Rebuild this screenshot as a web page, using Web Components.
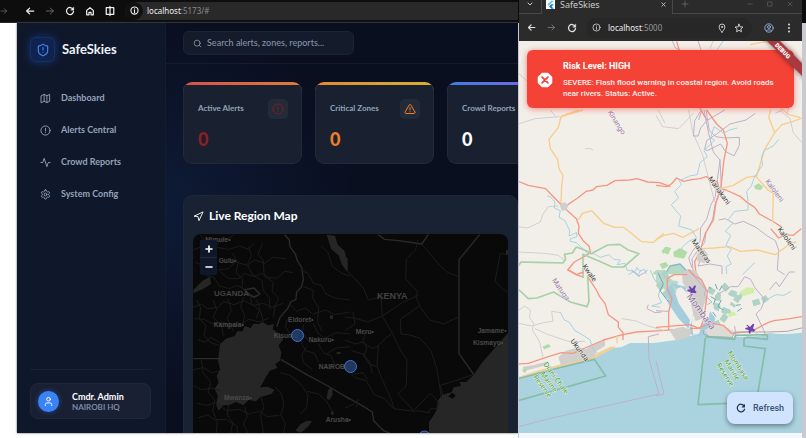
<!DOCTYPE html>
<html lang="en">
<head>
<meta charset="utf-8">
<title>SafeSkies</title>
<style>
html,body{margin:0;height:100%;background:#fff;overflow:hidden}
body{font-family:Lato,"Open Sans",sans-serif}
</style>
</head>
<body>
<desk-top>
  <dashboard-window slot="left"></dashboard-window>
  <phone-window slot="right"></phone-window>
</desk-top>
<script>
const define = (name, html) => {
  const t = document.createElement('template');
  t.innerHTML = html;
  customElements.define(name, class extends HTMLElement {
    constructor(){ super(); this.attachShadow({mode:'open'}).append(t.content.cloneNode(true)); }
  });
};

const icons = {
  shield:'<path d="M20 13c0 5-3.500 7.500-7.660 8.950a1 1 0 0 1-.67-.01C7.500 20.500 4 18 4 13V6a1 1 0 0 1 1-1c2 0 4.500-1.200 6.240-2.720a1.170 1.170 0 0 1 1.520 0C14.510 3.810 17 5 19 5a1 1 0 0 1 1 1z"/><path d="M12 8v4M12 16h.01"/>',
  map:'<path d="M3 6l6-3 6 3 6-3v15l-6 3-6-3-6 3zM9 3v15M15 6v15"/>',
  alert:'<circle cx="12" cy="12" r="10"/><path d="M12 7v6M12 16.500h.01"/>',
  activity:'<path d="M22 12h-4l-3 9L9 3l-3 9H2"/>',
  settings:'<path d="M12.220 2h-.44a2 2 0 0 0-2 2v.18a2 2 0 0 1-1 1.730l-.43.25a2 2 0 0 1-2 0l-.15-.08a2 2 0 0 0-2.730.73l-.22.38a2 2 0 0 0 .73 2.730l.15.1a2 2 0 0 1 1 1.720v.51a2 2 0 0 1-1 1.740l-.15.09a2 2 0 0 0-.73 2.730l.22.38a2 2 0 0 0 2.730.73l.15-.08a2 2 0 0 1 2 0l.43.25a2 2 0 0 1 1 1.730V20a2 2 0 0 0 2 2h.44a2 2 0 0 0 2-2v-.18a2 2 0 0 1 1-1.730l.43-.25a2 2 0 0 1 2 0l.15.08a2 2 0 0 0 2.730-.73l.22-.39a2 2 0 0 0-.73-2.730l-.15-.08a2 2 0 0 1-1-1.740v-.5a2 2 0 0 1 1-1.740l.15-.09a2 2 0 0 0 .73-2.730l-.22-.38a2 2 0 0 0-2.730-.73l-.15.08a2 2 0 0 1-2 0l-.43-.25a2 2 0 0 1-1-1.730V4a2 2 0 0 0-2-2z"/><circle cx="12" cy="12" r="3"/>',
  search:'<circle cx="11" cy="11" r="8"/><path d="M21 21l-4.300-4.300"/>',
  user:'<path d="M19 21v-2a4 4 0 0 0-4-4H9a4 4 0 0 0-4 4v2"/><circle cx="12" cy="7" r="4"/>',
  nav:'<path d="M3 11l19-9-9 19-2-8z"/>',
  triangle:'<path d="M21.730 18l-8-14a2 2 0 0 0-3.480 0l-8 14A2 2 0 0 0 4 21h16a2 2 0 0 0 1.730-3zM12 9v5M12 17.500h.01"/>',
  people:'<circle cx="9" cy="7" r="4"/><path d="M2 21v-2a4 4 0 0 1 4-4h6a4 4 0 0 1 4 4v2"/>',
  back:'<path d="M21 12H4M11 5l-7 7 7 7"/>',
  forward:'<path d="M3 12h17M13 5l7 7-7 7"/>',
  reload:'<path d="M19.500 8A8.500 8.500 0 1 0 20.500 13"/><path d="M21 3v7h-7z" fill="currentColor" stroke-width="1"/>',
  home:'<path d="M4 10.500L12 4l8 6.500V21h-5.500v-6h-5v6H4z"/>',
  split:'<path d="M10 4H3v16h7M14 4h7v16h-7M12 1v22"/>',
  info:'<circle cx="12" cy="12" r="9.500"/><path d="M12 11v6M12 7.500h.01"/>',
  pin:'<path d="M12 22s7-7 7-12.500a7 7 0 0 0-14 0C5 15 12 22 12 22z"/><circle cx="12" cy="9.500" r="1.500"/>',
  star:'<path d="M12 3l2.700 6.200 6.800.6-5.100 4.500 1.500 6.700-5.900-3.500L6.100 21l1.500-6.700-5.100-4.500 6.800-.6z"/>',
  account:'<circle cx="12" cy="12" r="10"/><circle cx="12" cy="9.500" r="3.500"/><path d="M5.500 19c3-4 10-4 13 0"/>',
  dots:'<g fill="currentColor" stroke="none"><circle cx="12" cy="3.500" r="2.300"/><circle cx="12" cy="12" r="2.300"/><circle cx="12" cy="20.500" r="2.300"/></g>',
  plus:'<path d="M12 3v18M3 12h18"/>', minus:'<path d="M3 12h18"/>',
  close:'<path d="M4 4l16 16M20 4L4 20"/>', down:'<path d="M4 8l8 8 8-8"/>', square:'<path d="M4 4h16v16H4z"/>',
  error:'<path d="M7.500 1h9L23 7.500v9L16.500 23h-9L1 16.500v-9z" fill="#fff" stroke="#fff"/><path d="M7 7l10 10M17 7L7 17" stroke="#f44336"/>',
  refresh:'<path d="M19.500 7A9 9 0 1 0 20.500 15"/><path d="M21.500 2v8.500H13z" fill="currentColor" stroke="none"/>',
  flutter:'<path d="M0 0h24v24H0z" fill="#fff" stroke="none"/><path d="M14 2h7L7 15l-3-3z" fill="#54c5f8" stroke="none"/><path d="M14 11h7l-6 6 6 6h-7l-6-6z" fill="#1679c9" stroke="none"/>'
};
customElements.define('ui-icon', class extends HTMLElement {
  connectedCallback(){
    if (this.shadowRoot) return;
    this.attachShadow({mode:'open'}).innerHTML = `<style>:host{display:inline-flex;flex:none;width:var(--size,12px);height:var(--size,12px)}svg{width:100%;height:100%;overflow:visible}</style>
    <svg viewBox="0 0 24 24" fill="none" stroke="currentColor" stroke-width="${this.getAttribute('weight')||2}" stroke-linecap="round" stroke-linejoin="round" aria-hidden="true">${icons[this.getAttribute('name')]}</svg>`;
  }
});

define('desk-top', `<style>
:host{display:grid;grid-template-columns:minmax(0,1fr) 288px;height:100vh;overflow:hidden}
::slotted(*){min-width:0;min-height:0}
</style><slot name="left"></slot><slot name="right"></slot>`);

define('dashboard-window', `<style>
:host{display:flex;flex-direction:column;background:#fff;overflow:hidden}
.page{flex:1;min-height:0;display:flex;margin:0 0 5px 17px;background:#0b1021;box-shadow:0 0 2px #555;overflow:hidden}
main{flex:1;min-width:0;display:flex;flex-direction:column;background:radial-gradient(circle at 0 45%,#0e1a36,#0a0f20 45%)}
header{padding:8px 17px;border-bottom:1px solid #151b2b}
.body{flex:1;min-height:0;display:flex;flex-direction:column;gap:31px;padding:18px 0 0 17px}
.cards{display:grid;grid-template-columns:repeat(3,119px);gap:13px}
</style>
<browser-bar></browser-bar>
<div class="page"><side-bar></side-bar><main>
<header><search-box></search-box></header>
<div class="body"><div class="cards">
<stat-card style="--from:#d9504f;--to:#e07b39;--tone:#8b2024;--icon:#7a1f24"><ui-icon slot="icon" name="alert"></ui-icon>Active Alerts<span slot="value">0</span></stat-card>
<stat-card style="--from:#e08a35;--to:#d6b12f;--tone:#ee7d24;--icon:#ee7d24"><ui-icon slot="icon" name="triangle"></ui-icon>Critical Zones<span slot="value">0</span></stat-card>
<stat-card style="--from:#3f7fe0;--to:#8a5ce0;--tone:#fff;--icon:#3b82f6"><ui-icon slot="icon" name="people"></ui-icon>Crowd Reports<span slot="value">0</span></stat-card>
</div><map-panel></map-panel></div></main></div>`);

define('browser-bar', `<style>
:host{display:flex;align-items:center;height:23px;flex:none;gap:8px;background:#0d0d0d;color:#eee;border-bottom:1px solid #24262c;box-sizing:border-box;padding-bottom:1px;overflow:hidden}
button{all:unset;display:flex;align-items:center;width:12px;justify-content:center;--size:10px}
.edge{width:16px;justify-content:flex-start;color:#777}
.dim{color:#777}
.url{flex:1;display:flex;align-items:center;gap:4px;height:18px;background:#292929;border-radius:9px 0 0 9px;margin-left:1px}
.url button{width:18px;height:18px;border-radius:9px;background:#111;--size:9px}
.url a{font:8px/12px "Noto Sans",sans-serif;color:#eee;text-decoration:none}
.url span{color:#8a8a8a}
nav{display:flex;gap:8px}
</style>
<button class="edge" aria-label="Next"><ui-icon name="forward" style="--size:8px"></ui-icon></button>
<nav><button aria-label="Back"><ui-icon name="back" weight="3"></ui-icon></button>
<button class="dim" aria-label="Forward"><ui-icon name="forward"></ui-icon></button>
<button aria-label="Reload"><ui-icon name="reload" weight="3"></ui-icon></button>
<button aria-label="Home"><ui-icon name="home" weight="3"></ui-icon></button>
<button aria-label="Split view"><ui-icon name="split" weight="3"></ui-icon></button></nav>
<div class="url"><button aria-label="Site information"><ui-icon name="info" weight="3"></ui-icon></button><a href="#">localhost<span>:5173/#</span></a></div>`);

define('side-bar', `<style>
:host{display:flex;flex-direction:column;width:149px;flex:none;box-sizing:border-box;background:#0f172a;border-right:1px solid #141c30;padding:14px 14px 14px 13px}
.brand{display:flex;align-items:center;gap:7px;color:#eef2fa;font:700 13px/25px Lato,sans-serif;padding-bottom:20px}
.badge{display:grid;place-items:center;width:25px;height:25px;border-radius:6px;background:#10234f;border:1px solid #163066;box-sizing:border-box;color:#3f82f2;box-shadow:0 0 8px #16377a;--size:14px}
nav{display:flex;flex-direction:column}
nav a{display:flex;align-items:center;gap:10px;height:32px;padding-left:10px;color:#94a3b8;text-decoration:none;font:700 9px/14px Lato,sans-serif;--size:11px}
footer{margin-top:auto;border-top:1px solid #182136;padding-top:13px}
.me{display:flex;align-items:center;gap:13px;height:36px;box-sizing:border-box;padding-left:7px;border:1px solid #20283c;border-radius:8px;background:#1a2033}
.avatar{display:grid;place-items:center;width:21px;height:21px;border-radius:50%;background:#3b82f6;color:#fff;--size:11px;box-shadow:0 0 5px #204b94}
b{display:block;font:700 9px/11px Lato,sans-serif;color:#fff}
small{display:block;font:700 8px/10px Lato,sans-serif;color:#7c8aa3}
</style>
<div class="brand"><span class="badge"><ui-icon name="shield"></ui-icon></span>SafeSkies</div>
<nav><a href="#"><ui-icon name="map"></ui-icon>Dashboard</a><a href="#"><ui-icon name="alert"></ui-icon>Alerts Central</a><a href="#"><ui-icon name="activity"></ui-icon>Crowd Reports</a><a href="#"><ui-icon name="settings"></ui-icon>System Config</a></nav>
<footer><div class="me"><span class="avatar"><ui-icon name="user"></ui-icon></span><div><b>Cmdr. Admin</b><small>NAIROBI HQ</small></div></div></footer>`);

define('search-box', `<style>
:host{display:block}
label{display:flex;align-items:center;gap:5px;width:171px;height:24px;box-sizing:border-box;padding:0 9px;border:1px solid #1c2434;border-radius:6px;background:#141b2b;color:#94a3b8;--size:9px}
input{all:unset;flex:1;min-width:0;font:500 9px/14px Lato,sans-serif;color:#94a3b8}
input::placeholder{color:#8491a8;opacity:1}
</style><label><ui-icon name="search"></ui-icon><input type="text" aria-label="Search" placeholder="Search alerts, zones, reports..."></label>`);

define('stat-card', `<style>
:host{display:block;height:82px;box-sizing:border-box;border-radius:9px;background:linear-gradient(90deg,var(--from),var(--to)) 0 0/100% 12px no-repeat #192131;overflow:hidden;padding-top:3px}
.in{height:100%;box-sizing:border-box;background:#192131;border:1px solid #202a3b;border-top:0;border-radius:0 0 9px 9px;padding:14px 13px 0 14px}
.top{display:flex;justify-content:space-between;align-items:flex-start;color:#94a3b8;font:700 8px/18px Lato,sans-serif;white-space:nowrap}
.ic{display:grid;place-items:center;width:20px;height:20px;border-radius:5px;background:#232b39;color:var(--icon);--size:12px}
.v{font:900 18px/20px Lato,sans-serif;color:var(--tone);padding-top:10px}
</style><div class="in"><div class="top"><div><slot></slot></div><span class="ic"><slot name="icon"></slot></span></div><div class="v"><slot name="value"></slot></div></div>`);

define('map-panel', `<style>
:host{flex:1;min-height:0;display:flex;flex-direction:column;box-sizing:border-box;background:#192233;border:1px solid #1d2738;border-bottom:0;border-radius:9px 9px 0 0;padding:10px 9px 0 9px}
h2{display:flex;align-items:center;gap:5px;margin:0 0 8px;color:#fff;font:700 12px/20px Lato,sans-serif;--size:11px}
.map{flex:1;min-height:0;position:relative;border-radius:8px 8px 0 0;overflow:hidden;background:#090909}
.zoom{position:absolute;left:7px;top:6px;display:grid;gap:1px;background:#1e293b;border-radius:3px;overflow:hidden}
button{all:unset;display:grid;place-items:center;width:17px;height:17px;background:#0f172a;color:#fff;--size:8px}
</style><h2><ui-icon name="nav"></ui-icon>Live Region Map</h2>
<div class="map"><dark-map></dark-map><div class="zoom"><button aria-label="Zoom in"><ui-icon name="plus" weight="5"></ui-icon></button><button aria-label="Zoom out"><ui-icon name="minus" weight="5"></ui-icon></button></div></div>`);

/* Regional roads and borders are drawn on two sheets, each at three units per pixel. */
define('dark-map', `<style>:host{display:block;height:100%}svg{display:block;width:100%;height:100%}text{font-family:"Liberation Sans",sans-serif;font-weight:700;fill:#4a4a4a;font-size:20px}.c{font-size:24px;fill:#424242}.r{stroke:#1c1c1c;stroke-width:3}.b{stroke:#2b2b2b;stroke-width:4}.w{fill:#262626;stroke:none}</style>
<svg viewBox="193 234 315 199" preserveAspectRatio="xMinYMin slice" fill="none" stroke-linejoin="round">
<g transform="translate(170 190) scale(.333333)">
<path class="w" d="M470 134l25 4 8 26 20 18 8 28-3 30-12-16-10-28-22-18-8-24zM70 300l28-28 22-12 3 22-22 14-31 14z"/>
<path class="w" d="M150 462l18-16 26-8 8-14 16 0 6-16 18 6 8-12 18 0 10-6 16 10 18-4-4 16 20 14 12 16-14 18 8 22-4 24-14 10 6 12-22 8-12 18-10 20-8 12 24-2 20 10-10 12-34 10-12 12-22-4-16 16-22-10-20 10-18 0-14 16-8-20 6-24-10-22 12-18-6-20 10-20-6-26z"/>
<path class="w" d="M376 722l16-20 20-10 14 2-12 16-22 18zM474 600l12-8 2 22-10 16-8-4zM480 374l10 4-2 10-8-2zM500 486h12v6h-12zM484 662l8 6-3 8-6-4z"/>
<path class="b" d="M344 134l14 16 2 20 16 22 6 20 14 22 4 36-6 22-14 14-2 22-16 8-8 18-24 28-10 28M70 506h84M332 508l82 48 60 32 66 40"/>
<path class="r" d="M70 180l24-10 20 12 22-6 14-26 30-6 12-10M90 134l20 24 28 14 40 6 30-10 28 10 18-20M76 216l20 10 28 0 18 14 34-4 20-20 36 10 22-16 30 10 24-18 40 4M110 256l22 6 16 26 30 8 24-10 22 14 20 16M150 244l26 22 30 0 18-16 28 10 22-10 18 14 30 0 22-20 24 4M188 190l16 30-6 28 20 20-2 24 24 26 6 24 26 22 8 30M236 168l8 30-12 26 14 28 30 20 4 30 18 20 2 36M278 160l-14 32 16 20 2 40 28 26-4 26 20 20-12 30-4 30M70 352l24-10 18 14 34-4 14-18 32 10 30-12 28 14 30-6 26 12 34-12M80 330l12 24-4 32 20 20-6 30 18 20 26 10M130 330l10 28-10 24 26 28 4 26M174 326l10 34-12 24 18 40M220 322l-8 28 12 26-6 32M260 330l10 26-12 30M72 386l30 2 24 14 32-6 24 12 30-4 24-16 34 8 26-12M84 450l22 6 16-14 24 14M70 540l30-8 24 16 20-4M94 510l6 40 22 26-8 30 20 24-6 34 14 30-4 40M72 588l24 12 30-6 24 8M82 640l28 6 26-8 34 24 40-4 26 14 34-8 22 16 36-4M84 684l30-10 20 16 34-2 32 20 4 26M176 644l-4 30 16 24-6 32M224 650l8 30-12 20 14 30M270 616l12 34-10 24 8 56M314 590l20 20 8 36-10 28 14 26-6 30M330 548l30 8 32 26 22 32-4 40-20 18"/>
<path class="r" d="M390 240l24 10 16 30 24 6 14 26 26 12 46 6M400 290l30 10-2 24 18 30-4 40 14 30M360 344l20 20 26-10 22 18 40-12 24 14 48-8M352 388l-6 22 16 24 30 20 14 28 28 8 12 28M400 404l-2 26 20 24 18 2M430 400l14 30 20 14 34-16 42 4M410 470l-14 24 4 24 26 20M444 460l18 30 20 6 16 34M470 490l30-16 40-4M412 604l34 8 22 20 22 36M454 168l20 20 12 40 30 22 24 8"/>
<path stroke="#292929" stroke-width="5" d="M232 310l20 12 14-8M222 300l30-6 20 20"/>
<g stroke="none"><text x="106" y="156">Mimule•</text><text x="146" y="220">Gulu•</text><text class="c" x="132" y="319">UGANDA</text><text x="131" y="411">Kampala•</text><text x="354" y="396">Eldoret•</text><text x="311" y="444">Kisumu</text><text x="416" y="457">Nakuru•</text><text x="446" y="538">NAIROBI</text><text x="162" y="631">Mwanza•</text></g>
</g>
<g transform="translate(345 190) scale(.333333)">
<path class="w" d="M489 428l-48 56-30 34-25 36-22 22-20 0 4 12-22 4-6 14-30 10-12 18-4 28-8 14-14 20v40h237zM0 204h8v42l-8-8zM483 180h8v14h-8zM310 620l10-12 12 8-8 10z"/>
<path class="b" d="M100 134l18 14 44 4 68 10 20-28M404 134l-62 75v282l44 62M0 618l50 28 32 20 4 26 30 30 20 8"/>
<path class="r" d="M218 150l-6 30-28 26-2 60 36 40-6 12 14 34 28 38 42 12 46-22M230 162l54 64 22 20 34 14M220 350l-54 38 2 44 22 2 34 10 34 38 18 56 14 90M108 316l4 62 30 52-20 14-22 22-4 60 12 34 30 66 10 32M142 430l24 50 20 30-2 78-26 24 48 50 50-52 26 28-4 18-22 0-6 12M112 378l-44 18-40-12-28-2M112 378l60-40 48-22M0 236l30 30 26 30 14 34 40-10M384 554l-58 20-40 12 8 30M212 664l-66-8-28-30-30-12-24-42-36-10-22-32M24 366l6 36-30 20M0 450l30 12 22-6 30 20 18-8M60 430l-6 24 12 20-10 26 18 14 8 36M20 482l38 12 14 28 24 8M466 190l-16 84 24 24 14 8M466 190l20 4M4 536l26 16 24-4 14 20M214 662l40 6M0 654l26-12 14-14-6 24"/>
<g stroke="none"><text class="c" style="font-size:27px" x="96" y="326">KENYA</text><text x="32" y="432">Meru•</text><text x="398" y="430">Jamame•</text><text x="384" y="464">Kismayo•</text><text x="-58" y="697">Arusha•</text></g>
</g>
<g fill="#24406d" fill-opacity=".85" stroke="#3b74d4" stroke-width="1"><circle cx="297.500" cy="335.500" r="6"/><circle cx="350.500" cy="366.500" r="6"/><circle cx="424.500" cy="437" r="6"/></g>
</svg>`);

define('phone-window', `<style>
:host{display:flex;flex-direction:column;background:linear-gradient(#2b2b2b 50%,#f4f8fe 50%);border:solid #c9c9cf;border-width:0 4px 0 1px;border-image:linear-gradient(#0c0c0c 23px,#c9c9cf 23px) 0 4 0 1;box-sizing:border-box;font-family:Roboto,sans-serif}
button{all:unset;display:flex;align-items:center;justify-content:center}
.tabs{display:flex;height:14px;flex:none;background:#2b2b2b;color:#ccc;font:9px/9px "Noto Sans",sans-serif;--size:7px}
.tabs>*{display:flex;align-items:center;box-sizing:border-box;padding-bottom:6px}
.menu{width:22px;border-bottom:1px solid #484848}
.tab{width:132px;border:solid #484848;border-width:0 1px;gap:5px;padding-left:4px}
.tab button{margin-left:auto;margin-right:6px}
.rest{flex:1;border-bottom:1px solid #484848;gap:14px;padding-left:8px;padding-right:9px;color:#777}
.rest .add{margin-right:auto;--size:8px}
.bar{display:flex;align-items:center;height:27px;flex:none;color:#e4e4e4;padding:0 8px 0 7px;gap:9px;--size:10px}
.bar button{width:11px}
.url{flex:1;display:flex;align-items:center;gap:6px;height:20px;background:#272727;border-radius:10px;padding:0 8px 0 5px;margin-right:2px}
.url a{flex:1;color:#eee;text-decoration:none;font:8px/12px "Noto Sans",sans-serif}.url span{color:#999}
.view{flex:1;min-height:0;position:relative;overflow:hidden;margin-bottom:5px}
.alert{position:absolute;left:8px;right:8px;top:9px;display:flex;align-items:center;gap:11px;min-height:58px;box-sizing:border-box;padding:9px 11px 8px;border-radius:6px;background:#f44336;color:#fff;box-shadow:0 1px 6px #f4433699;--size:14px}
h3{margin:0 0 4px;font:700 9px/13px Roboto,sans-serif}
p{margin:0;font:500 8px/11px Roboto,sans-serif;color:#ffeceb}
.fab{position:absolute;right:9px;bottom:9px;width:66px;height:32px;gap:7px;border-radius:8px;background:#d1e4ff;color:#3b5474;font:500 9px/12px Roboto,sans-serif;box-shadow:0 2px 5px #0006;--size:10px}
.fab ui-icon{color:#1d3654}
.ribbon{position:absolute;right:-21px;top:5px;width:80px;height:9px;transform:rotate(45deg);background:#aa3840;color:#fff;font:900 6px/9px Roboto,sans-serif;text-align:center;box-shadow:0 0 5px #0008}
</style>
<div class="tabs"><button class="menu" aria-label="Tabs"><ui-icon name="down" weight="4" style="--size:6px"></ui-icon></button><div class="tab"><ui-icon name="flutter" style="--size:9px"></ui-icon>SafeSkies<button aria-label="Close tab"><ui-icon name="close" weight="4" style="--size:5px"></ui-icon></button></div>
<div class="rest"><button class="add" aria-label="New tab"><ui-icon name="plus"></ui-icon></button><button aria-label="Minimize"><ui-icon name="minus" style="--size:6px"></ui-icon></button><button aria-label="Maximize"><ui-icon name="square" style="--size:6px"></ui-icon></button><button aria-label="Close"><ui-icon name="close" style="--size:6px"></ui-icon></button></div></div>
<div class="bar"><button aria-label="Back"><ui-icon name="back" weight="3" style="--size:9px"></ui-icon></button><button aria-label="Forward" style="color:#888"><ui-icon name="forward" style="--size:9px"></ui-icon></button><button aria-label="Reload"><ui-icon name="reload" weight="3"></ui-icon></button>
<div class="url"><button aria-label="Site information"><ui-icon name="info" style="--size:9px"></ui-icon></button><a href="#">localhost<span>:5000</span></a><button aria-label="Location"><ui-icon name="pin"></ui-icon></button><button aria-label="Bookmark"><ui-icon name="star"></ui-icon></button></div>
<button aria-label="Profile" style="color:#9dbdf4"><ui-icon name="account"></ui-icon></button><button aria-label="Menu"><ui-icon name="dots"></ui-icon></button></div>
<div class="view"><coast-map></coast-map>
<section class="alert" role="alert"><ui-icon name="error" weight="3"></ui-icon><div><h3>Risk Level: HIGH</h3><p>SEVERE: Flash flood warning in coastal region. Avoid roads near rivers. Status: Active.</p></div></section>
<div class="ribbon">DEBUG</div>
<button class="fab"><ui-icon name="refresh" weight="3"></ui-icon>Refresh</button></div>`);

/* The coast is drawn on five sheets, each at three units per pixel. */
define('coast-map', `<style>:host{display:block;height:100%}svg{display:block;width:100%;height:100%}text{font-family:"Noto Sans",sans-serif;font-size:21px;stroke:#f2efe9;stroke-width:3;paint-order:stroke;text-anchor:middle}.t{fill:#333}.v{fill:#9879ab}.m{fill:#32a03a}.red{stroke:#f59684;stroke-width:4}.or{stroke:#f8cd8b;stroke-width:4}.wt{stroke:#a6d3e0;stroke-width:3}.pu{stroke:#bfb0c8;stroke-width:3}.gy{stroke:#d2ced3;stroke-width:3}.gn{stroke:#a7d0a8;stroke-width:5}.sea{fill:#aad3df}.ug{fill:#d0cfcb}.pk{fill:#b1dca8}</style>
<svg viewBox="519 41 283 392" preserveAspectRatio="xMinYMin slice" fill="none" stroke-linejoin="round">
<path fill="#f2efe9" d="M510 30h310v420H510z"/>
<path class="sea" d="M510 382l8-3 20-7 22-6 24-5 14-5 8-7 16-2 8-4 24 0 22-3 10-3 16-4 6-4 6 2 14 6 12 0 20-1 10-3 8 1 10 0 12-1 32-8v130H510z"/>
<path stroke="#e8d4a0" stroke-width="2" d="M518 378l22-7 22-6 24-5 14-7 12-6"/>
<g transform="translate(510 0) scale(.333333)"><path class="pu" d="M486 120l10 24 18 8M564 122l10 30M576 330l-10 30"/><path class="red" d="M500 124l8 28M570 324l20 36"/><path class="or" d="M150 360l6-12 50-18M810 150l-40-26-50 10M812 324l24 20 34 8"/><path class="gy" d="M26 220l24 22M610 122l-10 24M836 324l-6 20"/><path class="wt" d="M640 122l-20 30M816 330l-20 10"/></g>
<g transform="translate(515 110) scale(.333333)">
<path class="gy" d="M10 42l50-16 74-6M106 0l18 22M430 0l20 40M210 116h16l8 4M10 350l28 4 38-18 8-24 16-22 30-2M10 426l80 4 40 6 20 16"/>
<path class="or" d="M204 0l-66 20-8 32-28 36 4 28 22 32 4 28 12 20-4 30-2 52 8 22M190 330l12-20 28-8 36 38 34 12 26 0 52 42 36 4 32-28"/>
<path class="red" d="M10 214l30 12 52 10 54 56 42-28 26-20 20-4 10-10 32-4 24-14 44-2 22-4 32 10 36 2 32 12M146 292l38 34 8 22-2 22 16 24 16 14 4 18-8 8-40 22-20 24 26 14 22 8"/>
<path class="wt" d="M96 258l10 2 14 16-2 18 18 8-4 20 18 10 14 30-2 16 22-10 2 12-20 6 0 8 18 4 24 22 8 10 22 2 18 10 26-8 14 14 20 2-10 14 24-4 6 20 18 4 20 16M340 494l22-12 4-10 8 12 14-6 6 14"/><path class="ug" d="M134 284l14-8 12 10-6 14-14 2z"/>
<path class="gn" d="M10 468l8-12 50 1 76 2 8-12-4-14 24-4 12-18 32 12 12 8 50-26 36-2 24 16 34 12-46 40-34 0-32-14-56-24v70M444 430l8-18M422 484l12 8"/>
</g>
<g transform="translate(656 110) scale(.333333)">
<path class="gy" d="M0 16l20 34 48 6 24-24 20-22M98 0l12 66 30 70 36 140M370 0l32 26 10 42 26 30"/>
<path class="pu" d="M136 0l-20 32-4 46 14 0 8-24 18-22 54-32M150 0l10 62 20 18 26 4 44-2 0 24-16 32-26-14-14-22-40 20-8-4 6-26 30-20 40-30 48-12 28-20M144 0l14 70 14 56 20 24-8 60-6 50-14 26-12 42-18 26-2 40-20 26-14 24 10 30M192 148l4 80-20 60-6 40-20 40-4 30-24 28-14 20 4 44M188 330l20-4 28 16 26-8 38 18 34 26 24 14 10 28-4 60 22 14M140 434l-14 34 36-6 36 6 0 24"/>
<path class="red" d="M152 0l30 42 20 18 12 40-10 48-10 90-14 40-8 52-24 40-18 60-14 24 4 38M0 226l32 4 14-8 16-18 20 10 30-6 20-2 18-6 34 16 6 20 20 4 44 20 20 18 22 14 14 20 44 24 24 16M436 356l-24 20-24-2-20 10-24-28"/>
<path class="or" d="M344 0l-6 22 18 46-30 50-24 80-30 4-40 24-40 10M356 68l22-24 34-10 26-10M300 200l36 40 16 10-2 86M0 388l24-12 28-6 28 12 50-26M136 416l38-2 46-4 34 14 50-4 54 14 46-34 16-4"/>
<path class="wt" d="M244 54l-24 6-16 10-30-20-10 34 12 6-32 32 10 18-22 18-8 36-24 4-30 14 6 12-20 20 12 20-22 20 12 16 16 18-6 30 40 12 14 24-24 10-20 18 2 22M368 88l-16 20-28 14-8 22 4 20-24 36-10 28-14 16 4 30 0 26-40 4-20 26 14 10-22 24 16 12-14 30 16 12-12 20 12 24-16 8 2 22 M260 494l36-36"/>
<path class="pk" d="M294 228l14-8 14 10-8 10-16-2zM16 424l14-14 16 4-10 20zM52 426l20-12 22 12-10 20-30-6zM10 462l20-6 8 12-18 10z"/><path class="ug" d="M176 236l12-8 12 12-14 8zM122 432l22-14 12 16-10 26-22-6z"/>
<path d="M28 492l14-24 30-6 20 20 10 12" fill="#b5dac3" stroke="#8ab4ce" stroke-width="4"/>
</g>
<g transform="translate(515 270) scale(.333333)">
<path class="ug" d="M130 262l22-20 40-10 20 6 18-12 30-12 10-10 0 24-26 16-10 24-50 12-46 6zM24 290l36-6 40-10-6 12-70 18z"/>
<path class="red" d="M162 0l22 14 22-8M218 20l26 40 10 20 16 20 10 34 30 22 0 16 14 16 0 22M0 282l40-2 60-20 40-12 34 2 36-16 56-24 48-14 50-10 76-4 50-4"/>
<path class="or" d="M10 326l110-34 120-30 60-32M306 196v24"/>
<path class="gn" d="M10 58l30 28 26-2 50-18 50 30 50 14 6-16-4-78"/>
<path class="gn" style="stroke:#85bda8" d="M10 326l120-32 108-26 34 50-100 28-162 46"/>
<path class="wt" d="M136 126l12 24 14 6 18 26 28 16 18 12 6 26 16 14M350 0l20 14 8-14M406 0l10 24 20 30-6 24 10 20-30 10 26 4"/><path class="gy" d="M10 122l18-14 18 12-2 24 12 16-4 20 22 36 10 46M10 160l40 8 36-10 28-4-4-30 28 4M60 176l40 18 60 20 50 0M320 146l40 6 40 16 48 14"/>
<path class="pu" d="M10 470l110-28 312-70-30-104-2-68 32-8M350 0l20 18 16-8 12-10M400 104l-4 12 24 12 20-2"/><path class="pk" d="M82 230l18-8 8 8-20 8zM20 300l18-4-8 14zM412 12l12-12 10 16z"/>
</g>
<g transform="translate(656 270) scale(.333333)">
<path d="M0 0h28l16 30 22 4-6 36-24 4-16-24-20-10z" fill="#bdd8ca"/>
<g stroke="#b0d3c6" stroke-width="18" stroke-dasharray="22 8"><path d="M6 40l28 34 20 38M156 56l30 20-4 36 34 14-20 30-30 12M200 44l24 24 26 10-22 30M20 6l20 28M290 100l30-8 14-10"/></g>
<path fill="#a4cddd" d="M48 40l40 10 8 24 18 30 0 24-8 30-6 20 0 14 36 8 8-18 24-6 10-32-16-20-4 20-20 20-10 30-16 0-4-32 4-40-16-50-20-20-14 4zM30 60l18-20 20 60 34 50-4 26-30-30-30-44z"/>
<path class="ug" d="M78 10l18-14 24 6 26 46 6 36-10 26-4 36-20 8-12-46 0-30-26-40zM40 180l40-10 26 10-6 20-40 12z"/>
<path fill="#dedbd6" d="M146 180l40-20 54 26-12 14-70-2z"/>
<path fill="#d1efa7" d="M250 68l22-16 24 2-2 14-30 10zM216 132l16-8 12 10-26 8z"/>
<g stroke="#69a8bd" stroke-width="3"><path d="M6 8l16 34-10 20 26 34M158 52l8 4M178 42l6 16M198 48l-8 14M164 80l14 8-6 16M196 90l-10 20 16 10M170 126l10 14M240 106l14-2M258 114l-14 10"/></g>
<path class="pu" d="M98 0l18 20 34 40-6 14 24 22-14 8M190 70l34-20 22 0 20-30 18 8 12 24 30 36-10 28-16 16 24 50 4 14-30-4M340 60l20-24 10 14 30-44 16 0M0 122l36 2M0 272l24 100-24 6M236 168l4 32"/>
<path class="red" d="M98 0l18 18 20 10 18 38-10 80-12 30-30-12-102 8M38 180l0-54 10-40-14-30 0-30 20-12 40 0M170 160l32 6 24 24 60-6 50-26 18-6 48-6 36-6M102 176l26-2 40-16"/>
<path class="wt" d="M330 90l30-16 24 2 22-12"/>
<path class="pu" d="M144 180l-2 12 20 8 66 2 10-16 96 0 60-2 60-14" style="stroke:#a9a6af"/>
<path class="gn" style="stroke:#85bda8" d="M148 200l88 8 2-12 96-2 0 14-60-6-10 4 0 22 64 8-24 142M148 204l-22 200 90-4"/>
<g fill="#6c43b0"><path d="M102 48l6 8 8-10 4 2-4 12 6 6-4 4-8-2-2 10-4-4 0-8-10-2 0-4 8-2-4-8z"/><path d="M274 164l8 7 9-10 4 2-4 12 7 6-5 4-8-2-3 9-4-4 0-8-10-2 0-4 9-2-6-7z"/></g>
</g>
<g transform="scale(.333333)">
<text class="v" transform="translate(1844 371) rotate(58)">Kinango</text><text class="t" transform="translate(2152 576) rotate(54)">Mariakani</text><text class="v" transform="translate(2318 576) rotate(54)">Kaloleni</text><text class="t" transform="translate(2355 720) rotate(54)">Kaloleni</text><text class="t" transform="translate(2098 758) rotate(54)">Mazeras</text><text class="t" transform="translate(1763 823) rotate(54)">Kwale</text><text class="v" transform="translate(1677 872) rotate(55)">Matuga</text><text class="t" transform="translate(1733 1054) rotate(54)">Ukunda</text><text class="v" style="font-size:27px;fill:#87629f" transform="translate(2096 940) rotate(54)">Mombasa</text>
<g class="m"><text transform="translate(1662 1138) rotate(54)">Diani-Chale</text><text transform="translate(1641 1150) rotate(54)">Marine</text><text transform="translate(1622 1163) rotate(54)">Reserve</text><text transform="translate(2208 1100) rotate(57)">Mombasa</text><text transform="translate(2190 1114) rotate(57)">Marine</text><text transform="translate(2170 1128) rotate(57)">Reserve</text></g></g>
</svg>`);
</script>
</body>
</html>
